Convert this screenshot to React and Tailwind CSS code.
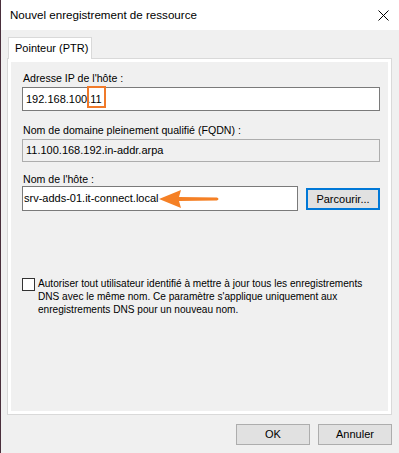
const Label = ({ children, className = "" }) => (
  <div className={`h-[14px] leading-[14px] ml-[1px] whitespace-nowrap text-[10.6px] ${className}`}>{children}</div>
);

const Arrow = () => (
  <svg width="62" height="20" viewBox="0 0 62 20" className="absolute left-[136px] top-[2px]">
    <path d="M0 10 L22 1 L20 8 L58 8.5 Q61 10 58 11.5 L20 12 L22 19 Z" fill="#f58025" />
  </svg>
);

export default function App() {
  return (
    <div className="w-[399px] h-[453px] bg-[#f0f0f0] border-l border-[#4a2f3c] flex flex-col font-['Liberation_Sans',sans-serif] text-[11px] text-black overflow-hidden">
      <div className="h-[30px] bg-white flex items-center justify-between pl-[9px] pr-[10px] shrink-0">
        <span className="text-[11.6px]">Nouvel enregistrement de ressource</span>
        <svg width="11" height="11" viewBox="0 0 11 11">
          <path d="M0.5 0.5 L10.5 10.5 M10.5 0.5 L0.5 10.5" stroke="#000" strokeWidth="1" />
        </svg>
      </div>

      <div className="flex flex-col pl-[6px] pr-[7px] pt-[7px]">
        <div className="relative z-10 -mb-[1px] ml-[1px] w-[84px] h-[22px] bg-white border border-b-0 border-[#d9d9d9] pl-[6px] leading-[20px] whitespace-nowrap">
          Pointeur (PTR)
        </div>
        <div className="h-[357px] border border-[#d9d9d9] bg-white p-[3px] flex">
          <div className="flex-1 bg-[#f0f0f0] flex flex-col pl-[11px] pr-[8px] pt-[9px]">
            <Label>Adresse IP de l'hôte :</Label>
            <div className="relative mt-[2px] h-[24px] bg-white border border-[#7a7a7a] pl-[3px] leading-[22px]">
              192.168.100.11
              <div className="absolute left-[64px] -top-[2px] w-[19px] h-[22px] border-2 border-[#f07a2a]" />
            </div>
            <Label className="mt-[12px]">Nom de domaine pleinement qualifié (FQDN) :</Label>
            <div className="mt-[2px] h-[23px] bg-[#f0f0f0] border border-[#adadad] pl-[3px] leading-[21px]">
              11.100.168.192.in-addr.arpa
            </div>
            <Label className="mt-[10px]">Nom de l'hôte :</Label>
            <div className="flex items-center gap-[8px]">
              <div className="relative w-[276px] h-[25px] bg-white border border-[#7a7a7a] pl-[1px] leading-[23px] whitespace-nowrap">
                srv-adds-01.it-connect.local
                <Arrow />
              </div>
              <button className="w-[74px] h-[22px] bg-[#e1e1e1] border-2 border-[#0078d7] leading-[18px] text-center">
                Parcourir...
              </button>
            </div>
            <div className="mt-[66px] flex items-start gap-[3px]">
              <div className="w-[13px] h-[13px] mt-[1px] border border-[#333] bg-white shrink-0" />
              <div className="leading-[13px] whitespace-nowrap text-[10.1px]">
                Autoriser tout utilisateur identifié à mettre à jour tous les enregistrements
                <br />
                DNS avec le même nom. Ce paramètre s'applique uniquement aux
                <br />
                enregistrements DNS pour un nouveau nom.
              </div>
            </div>
          </div>
        </div>
      </div>

      <div className="flex justify-end gap-[8px] pr-[7px] mt-[9px]">
        <button className="w-[74px] h-[21px] bg-[#e1e1e1] border border-[#adadad] leading-[19px] text-center">OK</button>
        <button className="w-[74px] h-[21px] bg-[#e1e1e1] border border-[#adadad] leading-[19px] text-center">Annuler</button>
      </div>
    </div>
  );
}
